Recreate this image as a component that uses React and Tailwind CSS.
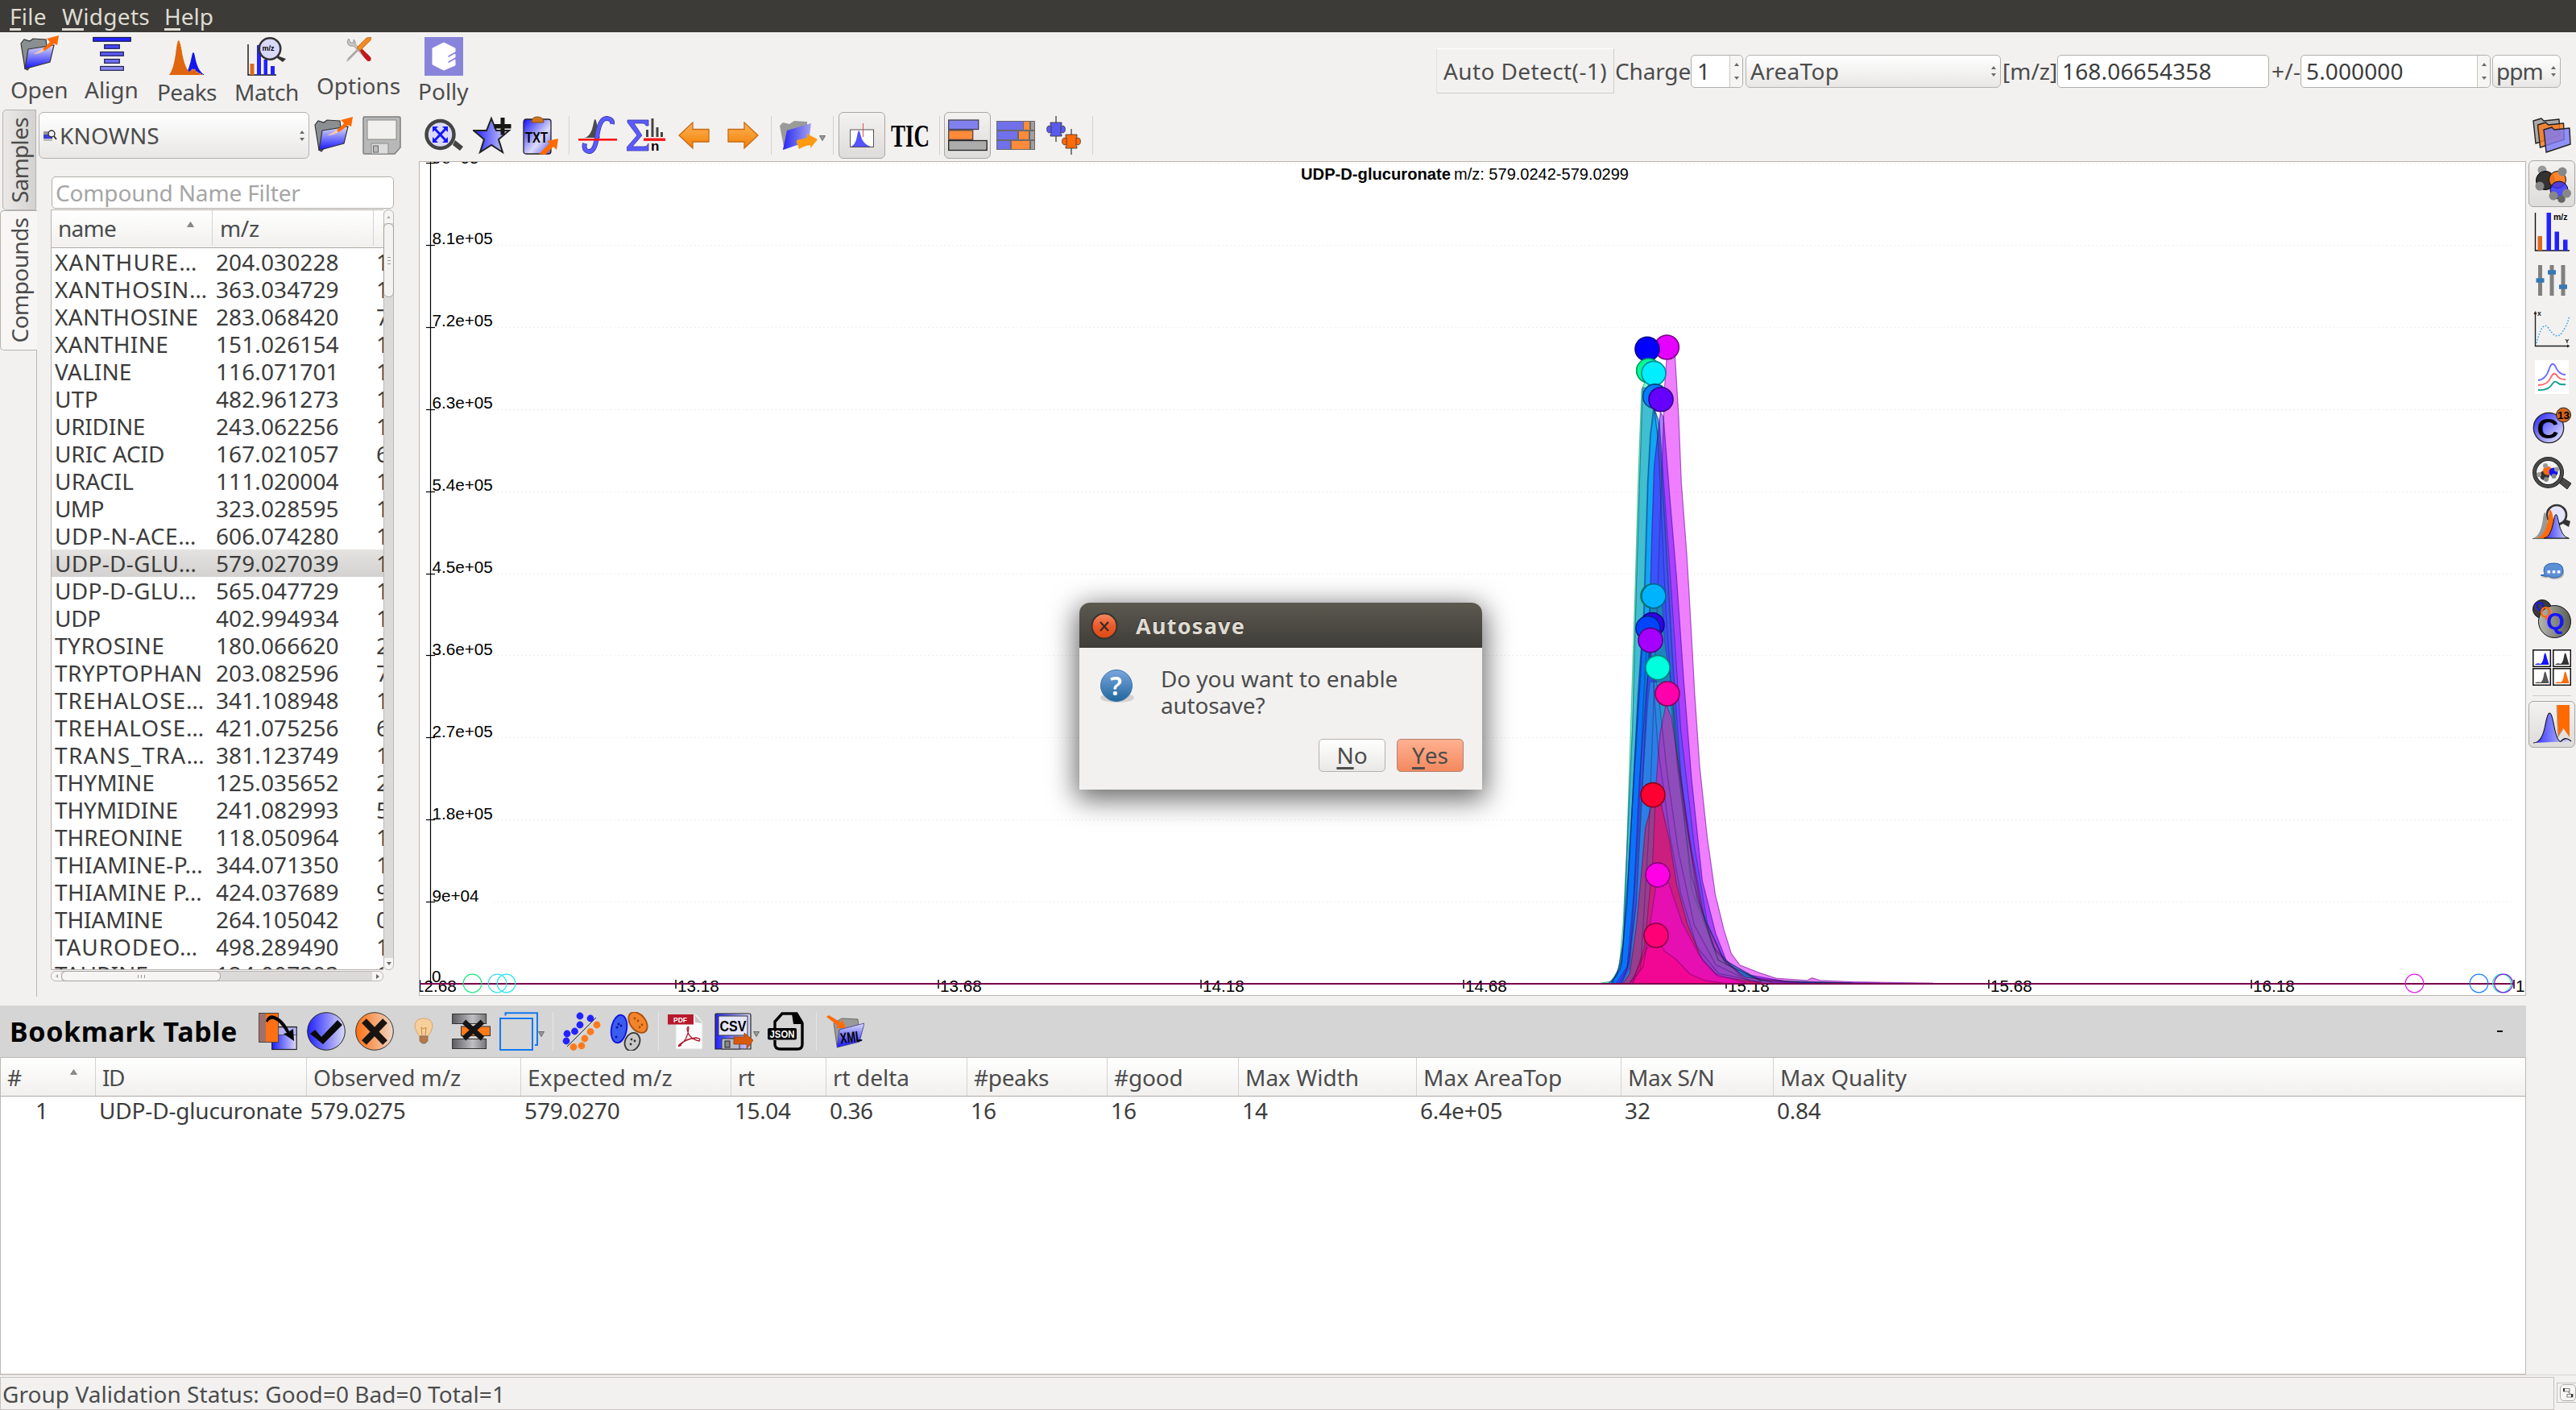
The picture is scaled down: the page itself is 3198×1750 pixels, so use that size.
import React, { useLayoutEffect, useRef, useState } from 'react';

/* Text run with a fixed advance width: tracking is computed from the measured width. */
function T({ w, className = '', children }) {
  const ref = useRef(null);
  const [ls, setLs] = useState(0);
  useLayoutEffect(() => {
    const el = ref.current;
    const n = el.textContent.length;
    setLs((w - el.offsetWidth) / n);
  }, [w]);
  return (
    <span className={`inline-block shrink-0 overflow-visible whitespace-pre ${className}`} style={{ width: w }}>
      <span ref={ref} className="inline-block whitespace-pre" style={{ letterSpacing: ls }}>
        {children}
      </span>
    </span>
  );
}

function Svg({ w = 48, h = 48, vb, className = '', children }) {
  return (
    <svg width={w} height={h} viewBox={vb || `0 0 ${w} ${h}`} className={`block shrink-0 ${className}`}>
      {children}
    </svg>
  );
}

const Defs = () => (
  <svg width="0" height="0" className="absolute">
    <defs>
      <linearGradient id="blueV" x1="0" y1="0" x2="0" y2="1"><stop offset="0" stopColor="#dcdcf8" /><stop offset="1" stopColor="#1414ff" /></linearGradient>
      <linearGradient id="blueH" x1="0" y1="0" x2="1" y2="0"><stop offset="0" stopColor="#2020ff" /><stop offset="1" stopColor="#dcdcf4" /></linearGradient>
      <linearGradient id="blueD" x1="0" y1="0" x2="1" y2="1"><stop offset="0" stopColor="#1010ff" /><stop offset=".6" stopColor="#dcdcf8" /><stop offset="1" stopColor="#5050ff" /></linearGradient>
      <linearGradient id="blueDD" x1="0" y1="0" x2="1" y2="1"><stop offset="0" stopColor="#1c1cff" /><stop offset="1" stopColor="#f4f4ff" /></linearGradient>
      <linearGradient id="orH" x1="0" y1="0" x2="1" y2="0"><stop offset="0" stopColor="#ff6f10" /><stop offset="1" stopColor="#eed8c8" /></linearGradient>
      <linearGradient id="orV" x1="0" y1="0" x2="0" y2="1"><stop offset="0" stopColor="#ffb35c" /><stop offset="1" stopColor="#f08000" /></linearGradient>
      <linearGradient id="grH" x1="0" y1="0" x2="1" y2="0"><stop offset="0" stopColor="#5c5c60" /><stop offset=".6" stopColor="#c0c0c4" /><stop offset="1" stopColor="#77777a" /></linearGradient>
      <linearGradient id="grB" x1="0" y1="0" x2="1" y2="0"><stop offset="0" stopColor="#b5b7b1" /><stop offset="1" stopColor="#5b5d58" /></linearGradient>
      <linearGradient id="pk" x1="0" y1="0" x2="1" y2="0"><stop offset="0" stopColor="#2b2bff" /><stop offset="1" stopColor="#d8d8f8" /></linearGradient>
      <linearGradient id="qm" x1="0" y1="0" x2="0" y2="1"><stop offset="0" stopColor="#7ba5de" /><stop offset="1" stopColor="#1f679c" /></linearGradient>
      <linearGradient id="cl" x1="0" y1="0" x2="0" y2="1"><stop offset="0" stopColor="#f58a63" /><stop offset=".5" stopColor="#ea5b2c" /><stop offset="1" stopColor="#dd4814" /></linearGradient>
    </defs>
  </svg>
);

const OpenFolder = (p) => (
  <Svg {...p}>
    <path d="M1 11 L5 6 L12 8 L16 5 L32 6 L33 14 L9 44 L6 42 Z" fill="#8a8f92" stroke="#333" strokeWidth="1.2" />
    <path d="M10 18 L42 13 L37 34 L6 42.500 Z" fill="url(#blueV)" stroke="#333" strokeWidth="1.2" />
    <path d="M16 24 Q28 20 37 9 L33 5 L48 1 L46 13 L42 11 Q32 22 16 24Z" fill="#ff6a00" />
    <path d="M16 24 Q22 22 28 17 L30 20 Q24 24 16 24Z" fill="#f7c9b4" />
  </Svg>
);

const AlignIcon = () => (
  <Svg>
    {[[0, 48, '#2222ff'], [14, 20, '#4545ff'], [9, 30, '#5a5af5'], [14, 20, '#7070f8'], [9, 30, '#8a8af5']].map(([x, w, c], i) => (
      <rect key={i} x={x + 0.7} y={3.5 + i * 9} width={w - 1.4} height="4.8" fill={c} stroke="#20204a" strokeWidth="1.2" />
    ))}
  </Svg>
);

const PeaksIcon = () => (
  <Svg>
    <path d="M22 47 Q27 40 30 24 Q32 14 34 24 Q37 42 46 47Z" fill="#1515f0" />
    <path d="M2 47 Q8 40 11 15 Q13 -6 17 13 Q20 36 27 44 Q32 36 36 43 L44 47Z" fill="#e8660e" stroke="#ffd9a0" strokeWidth=".8" strokeDasharray="2 2" />
    <path d="M2 47 Q8 40 11 15 Q13 0 17 15 Q20 36 27 44 Q32 39 36 44 L42 47Z" fill="#e0650f" />
  </Svg>
);

const MatchIcon = () => (
  <Svg>
    <path d="M1 9 V47 H36" fill="none" stroke="#111" strokeWidth="1.4" />
    <rect x="3.5" y="33" width="5" height="14" fill="#d96a20" />
    <rect x="12" y="10" width="5" height="37" fill="#2222ff" />
    <rect x="20.500" y="28" width="4.500" height="19" fill="#2222ff" />
    <rect x="29" y="36" width="5" height="11" fill="#2222ff" />
    <path d="M37 23 L48 27 L44 31 L37 26Z" fill="#333" />
    <circle cx="28" cy="14.500" r="13.200" fill="#d8d8fa" stroke="#333" strokeWidth="2.600" />
    <text x="18.500" y="17" fontFamily="Liberation Sans" fontWeight="700" fontSize="9">m/z</text>
  </Svg>
);

const OptionsIcon = () => (
  <Svg w={32} h={32}>
    <path d="M4 2 Q1 5 3 9 Q5 12 10 11 L26 28 Q29 31 31 28 Q32 26 29 23 L12 9 Q13 5 10 3 L10 7 L6 7Z" fill="#c9c9c4" stroke="#888" strokeWidth=".8" />
    <path d="M17 16 L20 14 L31 25 Q33 30 28 30 Q25 29 17 16Z" fill="#c4161c" />
    <path d="M1 31 L3 26 L16 13 L18 15 L5 28Z" fill="#a9a9a5" />
    <path d="M14 13 L26 1 L32 0 L31 4 L18 17Z" fill="#f08a24" stroke="#c25a00" strokeWidth=".7" />
  </Svg>
);

const PollyIcon = () => (
  <Svg>
    <rect width="48" height="48" fill="#8884dc" />
    <path d="M24 7 L38 14 V18 L29 23 V26 L38 21 V25 L29 30 V33 L38 28 V35 L24 41 L10 34 V14Z" fill="#fff" strokeLinejoin="round" stroke="#fff" strokeWidth="1" />
  </Svg>
);

const SaveIcon = (p) => (
  <Svg {...p}>
    <path d="M2.500 1 H45.500 Q47 1 47 3 V39 L40 47 H2.500 Q1 47 1 45 V3 Q1 1 2.500 1Z" fill="#b8b8b8" stroke="#7e7e7e" strokeWidth="1.500" />
    <rect x="6" y="5" width="36" height="24" fill="#f1f0ee" stroke="#888" />
    <path d="M11 47 V34 H32 V47Z" fill="#dcdcdc" stroke="#888" />
    <rect x="13.500" y="37" width="6" height="8" fill="#bbb" stroke="#666" />
  </Svg>
);

const ZoomIcon = () => (
  <Svg>
    <path d="M38 30 L48 38 L44 43 L35 36Z" fill="#444" />
    <circle cx="19.500" cy="23" r="17" fill="#dadaf8" stroke="#444" strokeWidth="4.500" />
    <path d="M12 15 L27 31 M27 15 L12 31" stroke="#1414ff" strokeWidth="3" />
    <path d="M10 13 h7 l-7 7z M29 13 v7 l-7 -7z M10 33 v-7 l7 7z M29 33 h-7 l7 -7z" fill="#1414ff" />
  </Svg>
);

const StarIcon = () => (
  <Svg>
    <path d="M23 3 L29 18 L45 18 L32 29 L37 45 L23 36 L9 45 L14 29 L1 18 L17 18Z" fill="url(#blueH)" stroke="#222" strokeWidth="2" />
    <path d="M34.500 2 h5 v8 h8 v5.500 h-8 v8 h-5 v-8 h-8 v-5.500 h8z" fill="#161616" />
  </Svg>
);

const TxtIcon = () => (
  <Svg>
    <rect x="2" y="4" width="34" height="43" rx="3" fill="url(#blueD)" stroke="#222" strokeWidth="1.300" />
    <path d="M12 8 Q12 1 19 1 Q27 1 27 8Z" fill="#d2741b" stroke="#8a4a10" />
    <text x="4" y="33" fontFamily="Liberation Sans" fontWeight="700" fontSize="18" textLength="28" lengthAdjust="spacingAndGlyphs">TXT</text>
    <path d="M21 47 L34 34 L31 31 L45 28 L43 42 L39 38 L29 48Z" fill="#ff6a00" />
  </Svg>
);

const IntegralIcon = () => (
  <Svg>
    <path d="M7 27 Q16 26 19 8 Q21 -1 23 10 Q25 24 27 27Z" fill="#4a4a4a" />
    <path d="M8 34 Q6 43 13 44 Q20 45 23 27 Q26 2 36 3 Q43 4 42 10" fill="none" stroke="#3b3b9e" strokeWidth="6" />
    <path d="M8 34 Q6 43 13 44 Q20 45 23 27 Q26 2 36 3 Q43 4 42 10" fill="none" stroke="#5a5aff" strokeWidth="4.500" />
    <rect x="0" y="28" width="48" height="2.600" fill="#ff1414" />
  </Svg>
);

const SumIcon = () => (
  <Svg>
    <path d="M1 5 H27 V12 H24 Q23 9 20 9 H9 L19 24 L7 38 H22 Q26 38 27 34 V43 H0 V39 L13 24 L1 8Z" fill="#5a5aff" stroke="#3b3b9e" strokeWidth=".8" />
    <path d="M25.500 26 V17 M32 26 V3 M38 26 V14 M43.500 26 V20" stroke="#444" strokeWidth="3" />
    <rect x="21" y="27.500" width="27" height="3.400" fill="#f31818" />
    <text x="30" y="43" fontFamily="Liberation Sans" fontWeight="700" fontSize="17">n</text>
  </Svg>
);

const ArrowL = ({ flip, className }) => (
  <Svg w={40} h={34} className={className}>
    <path transform={flip ? 'translate(40 0) scale(-1 1)' : undefined} d="M1 17 L18 1 V9.500 H38 V25 H18 V33Z" fill="url(#orV)" stroke="#c96a10" strokeWidth="1.300" />
  </Svg>
);

const FolderArrow = () => (
  <Svg>
    <path d="M0 12 L4 8 L12 10 L18 6 L34 7 L34 12 L8 40 L5 38Z" fill="#9a9a98" />
    <path d="M9 18 L39 9 L36 31 L4 42Z" fill="url(#blueH)" />
    <path d="M9 18 L39 9 L36 31 L4 42Z" fill="#3a3ae0" opacity=".35" />
    <path d="M21 33 V30 Q30 28 34 27 V22 L47 29 L38 40 V36 Q30 37 24 41Z" fill="#ff9a10" />
  </Svg>
);

const Caret = ({ className }) => (
  <Svg w={8} h={7} className={className}><path d="M.5 .5 H7.500 L4 6.500Z" fill="#999" stroke="#555" strokeWidth=".8" /></Svg>
);

const EicIcon = () => (
  <Svg w={30} h={32}>
    <rect x=".5" y="9" width="29" height="21.500" fill="#fff" stroke="#555" />
    <path d="M1.500 30 Q7 28 9 17 Q11 4 13.500 16 Q16 27 26 30Z" fill="#5353ff" />
    <path d="M16.500 1 V18" stroke="#e05050" strokeWidth="1" />
  </Svg>
);

const BarsIcon = () => (
  <Svg w={49} h={40}>
    <rect x=".7" y="1" width="37" height="11.500" fill="#8181ee" stroke="#445" strokeWidth="1.300" />
    <rect x=".7" y="13.800" width="30" height="11.500" fill="#ff8b3a" stroke="#544" strokeWidth="1.300" />
    <rect x=".7" y="26.500" width="47.500" height="12" fill="#acacac" stroke="#222" strokeWidth="1.300" />
  </Svg>
);

const StackIcon = () => (
  <Svg w={48} h={36}>
    <rect width="48" height="36" fill="#6a6a6a" />
    {[[1, 1, 32, '#7070ea'], [34, 1, 7, '#ff8b3a'], [43, 1, 4, '#a0a0a0'], [1, 13, 25, '#7070ea'], [28, 13, 12, '#ff8b3a'], [42, 13, 5, '#a0a0a0'], [1, 25, 16, '#7070ea'], [19, 25, 22, '#ff8b3a'], [43, 25, 4, '#a0a0a0']].map(([x, y, w, c], i) => (
      <rect key={i} x={x} y={y} width={w} height="10" fill={c} />
    ))}
  </Svg>
);

const BoxIcon = () => (
  <Svg w={44} h={48}>
    <path d="M12 0 V32 M31 16 V48" stroke="#333" strokeWidth="1.200" />
    {[[0, 7, '#5a5aee'], [19, 22, '#ff6a0a']].map(([x, y, c], i) => (
      <g key={i} fill={c} stroke="#333" strokeWidth=".8">
        <ellipse cx={x + 4} cy={y + 9.5} rx="3.400" ry="4.400" /><ellipse cx={x + 20} cy={y + 9.5} rx="3.400" ry="4.400" />
        <path d={`M${x + 5} ${y + 1} h14 v3 l-1 1 v10 l1 1 v2 h-14 v-2 l1 -1 v-10 l-1 -1z`} />
      </g>
    ))}
  </Svg>
);

/* ---------- right dock icons ---------- */
const Folders = () => (
  <Svg>
    {[[0, 2, '#9a9a98'], [5.500, 7, '#ff7a1a'], [13, 13, '#7a7af8']].map(([x, y, c], i) => (
      <path key={i} transform={`translate(${x} ${y})`} d="M1 3 L11 0 L14 3 L33 1 L34 21 L4 31Z" fill={c} fillOpacity=".82" stroke="#222" strokeWidth="1.400" strokeLinejoin="round" />
    ))}
  </Svg>
);
const Molecule = () => (
  <Svg>
    <circle cx="12" cy="7" r="5.500" fill="#999" />
    <circle cx="16" cy="20" r="11.500" fill="#333" stroke="#000" />
    <circle cx="31" cy="19" r="10.500" fill="#ff7a1a" stroke="#111" fillOpacity=".9" />
    <circle cx="33" cy="32" r="11" fill="#2b2bff" stroke="#111" fillOpacity=".8" />
    <circle cx="37" cy="9" r="5.500" fill="#888" /><circle cx="9" cy="27" r="5.500" fill="#888" />
    <circle cx="36" cy="43" r="4.800" fill="#666" /><circle cx="26" cy="39" r="5.500" fill="#888" /><circle cx="42.500" cy="36" r="5.500" fill="#888" />
  </Svg>
);
const MzBars = () => (
  <Svg>
    <path d="M3.500 0 V47 H46" fill="none" stroke="#111" strokeWidth="1.400" />
    <rect x="6.500" y="29" width="5.500" height="18" fill="#d96a20" />
    <rect x="17.500" y="0" width="5.500" height="47" fill="#2222ff" />
    <rect x="27.500" y="23.500" width="5.500" height="23.500" fill="#2222ff" />
    <rect x="38" y="33.500" width="5.500" height="13.500" fill="#2222ff" />
    <text x="26" y="8.500" fontFamily="Liberation Sans" fontWeight="700" fontSize="10.500">m/z</text>
  </Svg>
);
const Sliders = () => (
  <Svg>
    <path d="M9.500 5 V43 M24 5 V43 M38 5 V43" stroke="#808080" strokeWidth="5" />
    <path d="M4.500 24 h10 M19 14 h10 M33 32 h10" stroke="#3578b4" strokeWidth="5.500" />
  </Svg>
);
const Curve = () => (
  <Svg>
    <path d="M3.500 3 V45.500 H45" fill="none" stroke="#222" strokeWidth="1.400" />
    <path d="M1.500 6 L3.500 2 L5.500 6Z M43 43.500 L46.500 45.500 L43 47.500Z" fill="#222" />
    <path d="M5 42 Q12 14 19 22 Q30 40 37 28 Q43 20 46 8" fill="none" stroke="#35a5e5" strokeWidth="1.600" strokeDasharray="1.600 2" />
    <text x="6" y="8" fontFamily="Liberation Sans" fontWeight="700" fontSize="7">X</text>
    <text x="40.500" y="42" fontFamily="Liberation Sans" fontWeight="700" fontSize="7">Y</text>
  </Svg>
);
const Waves = () => (
  <Svg>
    <rect x="3" y="3" width="42" height="42" fill="#fff" />
    <g fill="none" strokeWidth="1.800">
      <path d="M7 28 Q17 27 21 13 Q25 2 30 14 Q34 21 41 21" stroke="#6a6aff" />
      <path d="M7 34 Q19 34 23 24 Q27 16 31 23 Q34 27 41 27" stroke="#ff6464" />
      <path d="M7 40 Q20 41 25 32 Q28 28 31 31 Q34 34 41 33" stroke="#10a090" />
    </g>
  </Svg>
);
const C13 = () => (
  <Svg>
    <circle cx="20" cy="27" r="18.700" fill="url(#blueDD)" stroke="#222" strokeWidth="1.300" />
    <text x="5.500" y="40" fontFamily="Liberation Sans" fontWeight="700" fontSize="35" textLength="27" lengthAdjust="spacingAndGlyphs">C</text>
    <circle cx="38.500" cy="11" r="9" fill="#d2641b" stroke="#222" />
    <text x="31" y="15.500" fontFamily="Liberation Sans" fontWeight="700" fontSize="13.500">13</text>
  </Svg>
);
const MolSearch = () => (
  <Svg>
    <path d="M36 28 L48 36 L43 43 L33 35Z" fill="#4a4a4a" stroke="#222" />
    <circle cx="19.500" cy="22.500" r="17" fill="#f4f4f4" stroke="#222" strokeWidth="5" />
    <circle cx="19.500" cy="22.500" r="17" fill="none" stroke="#4a4a4a" strokeWidth="3.200" />
    <circle cx="15" cy="26" r="6" fill="#333" /><circle cx="18.500" cy="20" r="5.500" fill="#ff6a0a" /><circle cx="26" cy="22" r="5.500" fill="#1414ff" />
    <circle cx="16" cy="14" r="3" fill="#999" /><circle cx="30" cy="18.500" r="3" fill="#999" /><circle cx="8" cy="25" r="3" fill="#999" /><circle cx="17" cy="31" r="3" fill="#888" /><circle cx="26.500" cy="27" r="3" fill="#888" />
  </Svg>
);
const PeakSearch = () => (
  <Svg>
    <path d="M37 19 L47 23 L45 30 L36 25Z" fill="#333" />
    <circle cx="30" cy="15" r="12" fill="#e4e4fa" stroke="#333" strokeWidth="2.600" />
    <path d="M0 44 Q10 42 13 20 Q15 4 18 20 L22 44Z" fill="#999" />
    <path d="M5 44 Q17 41 20 16 Q22 0 26 20 L30 44Z" fill="#ff6a0a" />
    <path d="M14 44 Q22 44 26 24 Q29 6 32 22 Q36 43 45 44Z" fill="url(#pk)" stroke="#111" />
    <path d="M0 44.500 H46" stroke="#444" strokeWidth=".8" />
  </Svg>
);
const Bubble = () => (
  <Svg>
    <path d="M26 34 Q39 34 39 26 Q39 17 27 16 Q14 16 14 25 Q14 28 16 29 Q13 31 10 31 Q17 33 20 32 Q23 34 26 34Z" fill="#9a9a9a" transform="translate(0 1)" opacity=".7" />
    <path d="M26 33 Q38 33 38 24 Q38 15 26.500 15 Q14 15 14 24 Q14 27 16 28 Q13 30 10 30 Q17 32 20 31 Q23 33 26 33Z" fill="#5b8fd6" stroke="#2a62ad" />
    <path d="M18.500 24 h3.600 v3.600 h-3.600z M24.700 24 h3.600 v3.600 h-3.600z M30.800 24 h3.600 v3.600 h-3.600z" fill="#fff" />
  </Svg>
);
const QIcon = () => (
  <Svg>
    <circle cx="12" cy="12" r="11.500" fill="#3a3a3a" stroke="#111" />
    <circle cx="27.500" cy="27.500" r="20" fill="url(#grB)" stroke="#111" />
    <g fontFamily="Liberation Sans" fontWeight="700">
      <text x="3.500" y="12.500" fontSize="14" fill="#1414ff">Q</text>
      <text x="9" y="21.500" fontSize="19" fill="#ff6a0a">Q</text>
      <text x="17" y="37" fontSize="29" fill="#1414ff">Q</text>
    </g>
  </Svg>
);
const GridIcon = () => (
  <Svg>
    {[[0, 2, '#1414ff'], [25, 2, '#333'], [0, 25, '#555'], [25, 25, '#ff6a0a']].map(([x, y, c], i) => (
      <g key={i} transform={`translate(${x} ${y})`}>
        <rect x=".8" y=".8" width="21.500" height="20.500" fill="#fff" stroke="#111" strokeWidth="1.500" />
        <path d="M3 19 L4 18 L7 17.300 L10 18 Q13 16 14 9 Q15.500 0 17.500 9 L20.500 19Z" fill={c} />
      </g>
    ))}
  </Svg>
);
const BookmarkPeak = () => (
  <Svg w={50} h={52}>
    <path d="M31 2 H47 V42 L39.500 31 L32.500 42Z" fill="#ff6a00" />
    <path d="M31 2 L32.500 42 L39.500 31" fill="none" stroke="#aaa" strokeWidth="1" />
    <path d="M2 49 Q13 49 17 26 Q22 -1 27 24 Q31 47 36 47.500 Q42 40 49 47" fill="url(#pk)" stroke="#111" strokeWidth="1.100" />
  </Svg>
);

/* ---------- bookmark toolbar icons ---------- */
const MoveIcon = () => (
  <Svg>
    <rect x="16.700" y="18.500" width="30.500" height="28" fill="url(#blueH)" stroke="#222" strokeWidth="1.200" />
    <rect x="17" y="19" width="30" height="9.500" fill="#b4b4f4" stroke="#222" strokeWidth=".6" />
    <rect x=".6" y="1.500" width="24" height="36" fill="#ff7014" stroke="#444" />
    <rect x="1" y="2" width="8" height="35" fill="#a0706a" />
    <path d="M9 11 Q12 2 20 5 Q31 9 38 24 L43 21 L44 36 L31 27 L35 26 Q27 12 19 9 Q14 8 11 13Z" fill="#000" />
  </Svg>
);
const CheckIcon = () => (
  <Svg>
    <circle cx="24" cy="24" r="23.300" fill="url(#blueH)" stroke="#222" />
    <path d="M4 27 L10 22 L18 31 L38 10 L44 16 L20 40Z" fill="#0a0a0a" />
  </Svg>
);
const CrossIcon = () => (
  <Svg>
    <circle cx="24" cy="24" r="23.300" fill="url(#orH)" stroke="#333" />
    <path d="M11 11 L37 38 M37 11 L11 38" stroke="#1a1410" strokeWidth="8" />
  </Svg>
);
const BulbIcon = () => (
  <Svg w={24} h={34}>
    <path d="M1 11 Q1 1 12 1 Q23 1 23 11 Q22 17 17.500 23 H6.500 Q2 17 1 11Z" fill="#f6cf9a" stroke="#d8a56c" />
    <path d="M10 22 L9 12 L12 14 L15 12 L14 22" fill="none" stroke="#c08040" strokeWidth=".9" />
    <path d="M7 23 H17 V29 L14 32 H10 L7 29Z" fill="#b87846" stroke="#7a6a5a" strokeWidth=".8" />
  </Svg>
);
const MergeIcon = () => (
  <Svg>
    <rect x=".6" y="2.500" width="42" height="12" fill="url(#grH)" stroke="#333" />
    <rect x=".6" y="33.500" width="42" height="12" fill="url(#grH)" stroke="#333" />
    <rect x="11.500" y="18" width="36" height="11.500" fill="#ff7a1a" stroke="#333" />
    <path d="M15 12 L38 33 M38 12 L15 33" stroke="#151515" strokeWidth="6.500" />
  </Svg>
);
const WindowsIcon = () => (
  <Svg>
    <path d="M7.500 4.500 V1.200 H47 V41 H44" fill="none" stroke="#1478f0" strokeWidth="2" />
    <rect x="1" y="8" width="40" height="39" fill="none" stroke="#1478f0" strokeWidth="2" />
  </Svg>
);
const ScatterIcon = () => (
  <Svg>
    <path d="M6 43 L42 7" stroke="#222" />
    {[[22, 5], [35, 8], [22, 16], [15.500, 24], [6, 27], [5, 36]].map(([x, y], i) => <circle key={i} cx={x} cy={y} r="4.400" fill="#2222ff" />)}
    {[[43, 16], [35, 24.500], [28, 33], [14, 43.500], [24, 42]].map(([x, y], i) => <circle key={i} cx={x} cy={y} r="4.400" fill="#ff7a1a" />)}
  </Svg>
);
const CellsIcon = () => (
  <Svg>
    <ellipse cx="11.500" cy="21" rx="9.500" ry="17.500" transform="rotate(10 11.500 21)" fill="#3a5cf0" stroke="#1010e0" strokeWidth="1.800" />
    <ellipse cx="35" cy="13" rx="9.500" ry="14.500" transform="rotate(-38 35 13)" fill="#f4842a" stroke="#a85010" strokeWidth="1.800" />
    <ellipse cx="28" cy="37" rx="9" ry="11.500" transform="rotate(24 28 37)" fill="#c8c8c8" stroke="#333" strokeWidth="1.800" />
    <g fill="#1010a0"><circle cx="11" cy="15" r="1.500" /><circle cx="9" cy="19" r="1.500" /><circle cx="14" cy="17" r="1.500" /><circle cx="8" cy="31" r="1.500" /></g>
    <g fill="#a05010"><circle cx="31" cy="8" r="1.400" /><circle cx="35" cy="11" r="1.400" /><circle cx="40" cy="16" r="1.400" /><circle cx="37" cy="19" r="1.400" /></g>
    <g fill="#333"><circle cx="27" cy="34" r="1.400" /><circle cx="31" cy="36" r="1.400" /><circle cx="26" cy="40" r="1.400" /></g>
  </Svg>
);
const PdfIcon = () => (
  <Svg>
    <path d="M11 3 H36 L44 12 V46 H11Z" fill="#fbfbfb" stroke="#ddd" />
    <path d="M34 3 L44 14 L35 13Z" fill="#c8c8c8" />
    <rect x="1" y="3" width="32" height="12.500" fill="#b8182c" />
    <text x="8" y="13" fontFamily="Liberation Sans" fontWeight="700" fontSize="9.500" fill="#fff" textLength="17" lengthAdjust="spacingAndGlyphs">PDF</text>
    <path d="M15 42 Q26 35 27 20 Q27 17 25 20 Q26 33 40 36 Q43 33 36 32 Q24 33 15 41 Q13 44 18 41" fill="none" stroke="#b0122a" strokeWidth="1.300" />
  </Svg>
);
const CsvIcon = () => (
  <Svg>
    <path d="M1 3 Q1 2 3 2 H43 Q45 2 45 4 V46 H1Z" fill="url(#blueH)" stroke="#222" strokeWidth="1.200" />
    <rect x="5" y="5" width="36" height="24" fill="#e6e6fa" stroke="#333" />
    <text x="6.500" y="24" fontFamily="Liberation Sans" fontWeight="700" fontSize="18" textLength="33" lengthAdjust="spacingAndGlyphs">CSV</text>
    <rect x="9" y="33" width="22" height="13" fill="#b8b8c8" stroke="#333" />
    <rect x="13" y="36" width="6" height="8" fill="#888" stroke="#222" />
    <path d="M24 31 H37 V26 L48 35 L40 46 V40 H24Z" fill="#d95a0c" stroke="#8a3a08" strokeWidth=".7" />
  </Svg>
);
const JsonIcon = () => (
  <Svg>
    <path d="M9 22 V12 L18 2 H36 L43 14 V40 Q43 46 37 46 H16 Q9 46 9 40 V35" fill="none" stroke="#000" strokeWidth="3.400" />
    <path d="M30 2 H37 L44 12 V15 H32Z" fill="#000" />
    <rect x="0" y="20" width="36" height="14.500" rx="2" fill="#000" />
    <text x="2.500" y="31.500" fontFamily="Liberation Sans" fontWeight="700" fontSize="12" fill="#fff" textLength="31" lengthAdjust="spacingAndGlyphs">JSON</text>
  </Svg>
);
const XmlIcon = () => (
  <Svg>
    <path d="M10 14 L20 8 L40 9 L41 18 L14 42Z" fill="#9a9a98" stroke="#555" strokeWidth=".8" />
    <path d="M17 22 L48 14 L42 37 L14 44Z" fill="url(#blueV)" stroke="#3a3a8a" strokeWidth=".8" />
    <text x="18" y="38" fontFamily="Liberation Sans" fontWeight="700" fontSize="19" textLength="27" lengthAdjust="spacingAndGlyphs" transform="rotate(-7 30 32)">XML</text>
    <path d="M1 6 L4 4 L19 13 L21 10 L25 20 L13 20 L15 17Z" fill="#ff6a0a" />
  </Svg>
);

const TriUp = ({ className }) => (
  <Svg w={9} h={7} className={className}><path d="M.5 6.500 H8.500 L4.500 .5Z" fill="#8a8a8a" stroke="#666" strokeWidth=".6" /></Svg>
);
const Spin = ({ className, gap = 'gap-[5px]' }) => (
  <span className={`flex flex-col items-center ${gap} ${className}`}>
    <Svg w={6} h={4}><path d="M0 4 H6 L3 0Z" fill="#6a6a6a" /></Svg>
    <Svg w={6} h={4}><path d="M0 0 H6 L3 4Z" fill="#6a6a6a" /></Svg>
  </span>
);
const Sep = ({ className }) => <span className={`h-12 w-px shrink-0 bg-[#d3d1ce] ${className}`} />;

/* ---------- data ---------- */
const compounds = [
  ['XANTHURE…', '204.030228', '1', 178], ['XANTHOSIN…', '363.034729', '1', 190], ['XANTHOSINE', '283.068420', '7', 178],
  ['XANTHINE', '151.026154', '1', 141], ['VALINE', '116.071701', '1', 96], ['UTP', '482.961273', '1', 54],
  ['URIDINE', '243.062256', '1', 112], ['URIC ACID', '167.021057', '6', 136], ['URACIL', '111.020004', '1', 98],
  ['UMP', '323.028595', '1', 61], ['UDP-N-ACE…', '606.074280', '1', 176], ['UDP-D-GLU…', '579.027039', '1', 176],
  ['UDP-D-GLU…', '565.047729', '1', 176], ['UDP', '402.994934', '1', 57], ['TYROSINE', '180.066620', '2', 136],
  ['TRYPTOPHAN', '203.082596', '7', 184], ['TREHALOSE…', '341.108948', '1', 186], ['TREHALOSE…', '421.075256', '6', 186],
  ['TRANS_TRA…', '381.123749', '1', 187], ['THYMINE', '125.035652', '2', 124], ['THYMIDINE', '241.082993', '5', 153],
  ['THREONINE', '118.050964', '1', 159], ['THIAMINE-P…', '344.071350', '1', 184], ['THIAMINE P…', '424.037689', '9', 183],
  ['THIAMINE', '264.105042', '0', 134], ['TAURODEO…', '498.289490', '1', 178], ['TAURINE', '124.007393', '6', 116],
];

const columns = [
  ['#', 118, 17, '1', 37], ['ID', 262, 27, 'UDP-D-glucuronate', 5, 253], ['Observed m/z', 266, 183, '579.0275', 6, 119],
  ['Expected m/z', 261, 180, '579.0270', 5, 119], ['rt', 118, 21, '15.04', 5, 70], ['rt delta', 175, 95, '0.36', 4, 54],
  ['#peaks', 174, 93, '16', 5, 32], ['#good', 163, 85, '16', 5, 32], ['Max Width', 221, 141, '14', 5, 32],
  ['Max AreaTop', 254, 172, '6.4e+05', 5, 102], ['Max S/N', 189, 107, '32', 5, 32], ['Max Quality', 0, 157, '0.84', 5, 55],
];

/* Peak shapes in plot units: 3 units per pixel across, 1.8233 per pixel down. */
const peaks = [
  ['#e000ff', '380,1532 410,1500 440,1200 465,800 488,400 500,180 508,110 538,110 552,250 562,400 582,560 590,640 612,880 630,1040 658,1200 688,1330 720,1410 748,1465 780,1491 850,1508 915,1521 1030,1526 1048,1520 1080,1526 1200,1529 1500,1532'],
  ['#00ff99', '260,1532 300,1528 330,1500 345,1400 358,1240 370,1020 390,640 402,380 414,190 430,165 450,175 475,300 500,500 545,1000 600,1320 700,1480 860,1526 1200,1532'],
  ['#0080d4', '290,1532 322,1515 346,1440 358,1250 380,950 395,620 406,400 418,185 450,185 475,300 505,700 545,1030 600,1290 680,1450 780,1510 900,1529 1200,1532'],
  ['#00a0ff', '300,1532 340,1490 365,1280 385,1060 420,720 436,400 446,290 458,230 480,260 515,560 560,960 610,1220 660,1400 730,1490 860,1526 1200,1532'],
  ['#00a0ff', '305,1532 340,1480 362,1300 385,1080 424,700 438,400 448,290 462,230 478,270 500,480 530,800 560,1060 620,1340 700,1480 860,1528'],
  ['#6600ff', '330,1532 360,1500 395,1350 420,1050 440,800 452,520 461,360 484,240 495,250 520,440 545,620 570,840 600,1070 640,1300 690,1420 730,1482 820,1514 960,1529 1300,1532'],
  ['#00b884', '340,1532 370,1480 400,1200 420,900 440,700 450,670 490,670 500,760 520,840 545,980 575,1150 630,1350 690,1460 780,1514 900,1530'],
  ['#0044ff', '300,1532 335,1500 360,1350 380,1120 400,880 415,750 430,735 455,830 475,1000 520,1200 560,1330 620,1450 700,1510 860,1530'],
  ['#5a30ff', '320,1532 360,1495 385,1330 405,1080 430,880 447,780 475,870 510,1060 550,1230 610,1400 690,1490 820,1528'],
  ['#20b4dd', '340,1532 368,1500 392,1360 412,1130 437,900 446,850 500,850 525,910 555,1060 590,1210 640,1370 720,1480 860,1526'],
  ['#ff00aa', '380,1532 425,1450 455,1260 468,1080 482,970 505,900 525,930 565,1090 600,1230 650,1390 720,1480 800,1519 1000,1530'],
  ['#ff0033', '345,1532 370,1510 395,1400 412,1290 428,1180 456,1120 488,1130 518,1210 545,1310 585,1400 640,1480 700,1517 860,1531'],
  ['#ff00e6', '370,1532 420,1495 440,1420 468,1310 515,1305 565,1395 630,1470 690,1512 800,1531'],
  ['#ff0077', '370,1532 400,1500 435,1450 490,1450 500,1460 540,1477 595,1512 650,1526 720,1532'],
];
const dots = [
  [508, 93, '#e600ff', '#7a0088'], [435, 97, '#0000ff', '#000088'], [440, 146, '#00ff99', '#009955'], [459, 152, '#00eeff', '#008899'],
  [464, 204, '#0080ff', '#004488'], [486, 211, '#6600ff', '#330088'], [456, 656, '#00ff66', '#008844'], [459, 656, '#00b3ff', '#006688'], [453, 721, '#3300e6', '#180088'],
  [438, 729, '#0044ff', '#002288'], [447, 756, '#a600ff', '#550088'], [474, 818, '#00ffdd', '#008877'], [510, 877, '#ff00aa', '#88005a'],
  [456, 1106, '#ff0033', '#88001a'], [474, 1287, '#ff00e6', '#88007a'], [468, 1424, '#ff0077', '#880040'],
];
const yLabels = ['9e+04', '1.8e+05', '2.7e+05', '3.6e+05', '4.5e+05', '5.4e+05', '6.3e+05', '7.2e+05', '8.1e+05', '9e+05'];
const xLabels = ['12.68', '13.18', '13.68', '14.18', '14.68', '15.18', '15.68', '16.18', '16.68'];

function Chart() {
  return (
    <svg width="2614" height="1033" viewBox="521 201 2614 1033" className="block" fontFamily="Liberation Sans" fontSize="20.700">
      {yLabels.map((t, i) => {
        const y = 1221 - 101.9 * (i + 1);
        return (
          <g key={t}>
            <path d={`M612 ${Math.round(y) + 0.5} H3122`} stroke="#efefef" strokeDasharray="2 3" />
            <path d={`M529 ${Math.round(y) + 0.5} H540`} stroke="#000" strokeWidth="1.200" />
            <text x="536.500" y={i === 9 ? y + 1 : y - 0.5}>{t}</text>
          </g>
        );
      })}
      <path d="M534.500 201 V1221" stroke="#000" strokeWidth="1.200" />
      <text x="536" y="1218.500">0</text>
      {xLabels.map((t, i) => (
        <g key={t}>
          <path d={`M${(i ? 513 : 521) + 326 * i} 1216 V1227`} stroke="#000" strokeWidth="1.500" />
          <text x={515 + 326 * i} y="1230.500">{t}</text>
        </g>
      ))}
      <g transform="translate(1900 380) scale(.33333 .54845)">
        {peaks.map(([c, pts], i) => (
          <polygon key={i} points={pts} fill={c} fillOpacity=".5" stroke={c} strokeOpacity=".5" strokeWidth=".8" vectorEffect="non-scaling-stroke" />
        ))}
        {peaks.map(([c, pts], i) => (
          <polyline key={i} points={pts} fill="none" stroke={i === 1 ? '#006040' : '#201050'} strokeOpacity=".34" strokeWidth="1.200" vectorEffect="non-scaling-stroke" />
        ))}
      </g>
      <path d="M521 1221 H3121" stroke="#78004e" strokeWidth="2" />
      {dots.map(([x, y, c, s], i) => (
        <circle key={i} cx={1900 + x / 3} cy={380 + y / 1.8233} r="15" fill={c} stroke={s} strokeWidth="1.600" />
      ))}
      {[[586.5, '#18e878'], [617.5, '#30e0e8'], [628.5, '#20e8f4'], [2997.5, '#e018f0'], [3077.5, '#1080ff'], [3106, '#20f0a0'], [3108, '#8a10f0']].map(([x, c], i) => (
        <circle key={i} cx={x} cy="1220.500" r="11.300" fill="none" stroke={c} strokeWidth="1.200" />
      ))}
      <text x="1615" y="222.500" fontSize="20" fontWeight="700" textLength="186" lengthAdjust="spacingAndGlyphs">UDP-D-glucuronate</text>
      <text x="1805" y="222.500" fontSize="20" textLength="217" lengthAdjust="spacingAndGlyphs">m/z: 579.0242-579.0299</text>
    </svg>
  );
}

function Dialog() {
  return (
    <div className="absolute left-[1340px] top-[748px] flex h-[232px] w-[500px] flex-col rounded-t-[13px] bg-[#f2f1f0] shadow-[0_8px_34px_4px_rgba(0,0,0,0.6)]">
      <div className="flex h-14 shrink-0 items-center rounded-t-[13px] bg-linear-to-b from-[#5c5950] to-[#3e3d38] pl-[14px] pt-[2px]">
        <Svg w={34} h={34}>
          <circle cx="17" cy="17" r="15.500" fill="url(#cl)" stroke="#35332e" strokeWidth="2" />
          <path d="M12 12 L22 23 M22 12 L12 23" stroke="#3a2a22" strokeWidth="2.200" />
        </Svg>
        <T w={136} className="ml-[22px] text-[27px] font-bold leading-9 text-[#dfdbd2] [text-shadow:0_-1px_1px_#222]">Autosave</T>
      </div>
      <div className="flex pl-[25px] pt-[21px]">
        <Svg w={44} h={52}>
          <ellipse cx="22" cy="41" rx="21" ry="6" fill="#d4d2d0" />
          <circle cx="21" cy="26" r="19.500" fill="url(#qm)" stroke="#3a74ad" />
          <text x="13" y="37.500" fontFamily="Noto Sans" fontSize="32" fontWeight="600" fill="#fff">?</text>
        </Svg>
        <div className="ml-[32px] mt-px flex flex-col text-[28px] leading-[33px] text-[#4c4c4c]">
          <T w={294}>Do you want to enable</T>
          <T w={129}>autosave?</T>
        </div>
      </div>
      <div className="mt-[25px] flex justify-end gap-[14px] pr-[23px] text-[28px] text-[#4c4c4c]">
        <button className="flex h-[41px] w-[83px] justify-center rounded-[5px] border border-[#b4b1ad] bg-linear-to-b from-white to-[#e9e8e6] leading-[39px]">
          <span className="underline decoration-[3px] underline-offset-[4px]">N</span>o
        </button>
        <button className="flex h-[41px] w-[83px] justify-center rounded-[5px] border border-[#b3826d] bg-linear-to-b from-[#ffb090] to-[#f3895f] leading-[39px]">
          <span className="underline decoration-[3px] underline-offset-[4px]">Y</span>es
        </button>
      </div>
    </div>
  );
}

const Tool = ({ w, ml, top, icon, gap, label }) => (
  <div className={`flex shrink-0 flex-col items-center ${ml} ${top}`}>
    {icon}
    <T w={w} className={`leading-9 ${gap}`}>{label}</T>
  </div>
);

export default function App() {
  const field = 'flex h-[41px] shrink-0 items-center rounded-[5px] border border-[#b2afab] bg-white leading-[39px] text-[#3c3c3c]';
  const combo = 'flex shrink-0 items-center rounded-[6px] border border-[#b5b2ae] bg-linear-to-b from-white to-[#e8e7e5]';
  return (
    <div className="relative flex h-[1750px] w-[3198px] flex-col overflow-hidden bg-[#f2f1f0] font-['Noto_Sans',sans-serif] text-[28px] text-[#4c4c4c]">
      <Defs />
      {/* menu bar */}
      <div className="flex h-10 shrink-0 items-start bg-[#3c3b37] pl-3 leading-10 text-[#dfdbd2]">
        {[['F', 'ile', 46, 'mr-[19px]', 'w-[14px]'], ['W', 'idgets', 109, 'mr-[18px]', 'w-[27px]'], ['H', 'elp', 61, '', 'w-[20px]']].map(([a, b, w, m, u]) => (
          <span key={a} className={`flex flex-col ${m}`}>
            <T w={w} className="h-[35px] leading-10">{a + b}</T>
            <span className={`h-[3px] bg-[#dfdbd2] ${u}`} />
          </span>
        ))}
      </div>

      {/* main toolbar */}
      <div className="flex h-24 shrink-0 items-start">
        <Tool w={71} ml="ml-[13px]" top="mt-[3px]" gap="mt-[2px]" icon={<OpenFolder />} label="Open" />
        <Tool w={67} ml="ml-[21px]" top="mt-[3px]" gap="mt-[2px]" icon={<AlignIcon />} label="Align" />
        <Tool w={74} ml="ml-[23px]" top="mt-[6px]" gap="mt-[2px]" icon={<PeaksIcon />} label="Peaks" />
        <Tool w={80} ml="ml-[22px]" top="mt-[6px]" gap="mt-[2px]" icon={<MatchIcon />} label="Match" />
        <Tool w={104} ml="ml-[22px]" top="mt-[6px]" gap="mt-[10px]" icon={<OptionsIcon />} label="Options" />
        <Tool w={63} ml="ml-[22px]" top="mt-[6px]" gap="mt-[1px]" icon={<PollyIcon />} label="Polly" />
        <div className="ml-auto mr-[19px] mt-5 flex items-center">
          <div className="flex h-14 w-[221px] items-center justify-center border border-[#cfccc8] border-l-[#e4e2e0] border-t-white">
            <T w={203}>Auto Detect(-1)</T>
          </div>
          <T w={94} className="ml-px">Charge</T>
          <div className={`${field} w-[65px] pl-[7px]`}>
            <T w={16}>1</T>
            <span className="ml-auto flex h-full w-4 items-center justify-center rounded-r-[5px] border-l border-[#c8c5c2] bg-[#f6f5f4]"><Spin gap="gap-[13px]" /></span>
          </div>
          <div className={`${combo} ml-[3px] h-[41px] w-[317px] pl-[5px] pr-[5px]`}><T w={110}>AreaTop</T><Spin className="ml-auto" /></div>
          <T w={68} className="ml-[2px]">[m/z]</T>
          <div className={`${field} w-[263px] pl-[5px]`}><T w={186}>168.06654358</T></div>
          <T w={36} className="ml-[3px]">+/-</T>
          <div className={`${field} w-[236px] pl-[6px]`}>
            <T w={121}>5.000000</T>
            <span className="ml-auto flex h-full w-4 items-center justify-center rounded-r-[5px] border-l border-[#c8c5c2] bg-[#f6f5f4]"><Spin gap="gap-[13px]" /></span>
          </div>
          <div className={`${combo} ml-[2px] h-[41px] w-[85px] pl-[4px] pr-[5px]`}><T w={58}>ppm</T><Spin className="ml-auto" /></div>
        </div>
      </div>

      <div className="flex h-[1570px] shrink-0">
        <div className="flex w-[3136px] shrink-0 flex-col">
          <div className="flex h-[1112px] shrink-0">
            {/* dock tabs */}
            <div className="flex w-[46px] shrink-0 flex-col">
              <div className="ml-[3px] flex h-[125px] w-[42px] shrink-0 items-center justify-center rounded-l-[5px] border border-[#b5b2ae] bg-linear-to-r from-[#ebeae8] to-[#d4d2d0]">
                <T w={106} className="-rotate-90 leading-9">Samples</T>
              </div>
              <div className="flex h-[174px] w-[46px] shrink-0 items-center justify-center rounded-l-[5px] border border-r-0 border-[#b5b2ae] bg-[#f7f6f5]">
                <T w={155} className="-rotate-90 leading-9">Compounds</T>
              </div>
              <div className="h-[802px] shrink-0 border-r border-[#bab7b3]" />
            </div>

            {/* compounds panel */}
            <div className="flex w-[473px] shrink-0 flex-col">
              <div className="flex h-[83px] items-start pl-[2px] pt-[3px]">
                <div className={`${combo} h-[58px] w-[336px] pl-[5px] pr-[5px]`}>
                  <Svg w={17} h={14}>
                    <rect x="0" y="2" width="11" height="4" fill="#999" /><rect x="0" y="6" width="11" height="5" fill="#3c3ce0" /><rect x="0" y="11" width="11" height="3" fill="#bbb" />
                    <circle cx="10" cy="5" r="4" fill="#eee" stroke="#333" strokeWidth="1.400" /><path d="M13 8 L16 12" stroke="#333" strokeWidth="1.800" />
                  </Svg>
                  <T w={124} className="ml-[3px]">KNOWNS</T>
                  <Spin className="ml-auto" />
                </div>
                <OpenFolder className="ml-[6px] mt-[5px]" />
                <SaveIcon className="ml-[12px] mt-[5px]" />
              </div>
              <div className={`${field} ml-[18px] !h-[40px] w-[425px] pl-[4px] !text-[#a5a5a5]`}><T w={304}>Compound Name Filter</T></div>
              <div className="ml-[17px] mt-px flex">
                <div className="flex h-[944px] w-[413px] flex-col overflow-hidden border border-r-0 border-[#b9b5b0] bg-white">
                  <div className="flex h-[47px] shrink-0 items-center border-b border-[#b0aca7] bg-linear-to-b from-white to-[#f1f0ee] pb-[2px]">
                    <div className="flex h-full w-[200px] shrink-0 items-center border-r border-[#d5d3d0] pl-[8px]"><T w={72}>name</T><TriUp className="mb-[9px] ml-[88px]" /></div>
                    <div className="flex h-full w-[200px] shrink-0 items-center border-r border-[#d5d3d0] pl-[9px]"><T w={49}>m/z</T></div>
                    <span className="ml-[10px] w-[2px] overflow-hidden text-[#c06a3a]">r</span>
                  </div>
                  {compounds.map(([n, v, c, w], i) => (
                    <div key={i} className={`flex h-[34px] shrink-0 items-center leading-[34px] text-[#3c3c3c] ${i === 11 ? 'bg-linear-to-b from-[#e4e3e1] to-[#d3d2d0]' : ''}`}>
                      <T w={w} className="ml-[4px]">{n}</T>
                      <span className="grow" />
                      <span className="flex w-[208px] shrink-0"><T w={153}>{v}</T><span className="ml-[46px]">{c}</span></span>
                    </div>
                  ))}
                </div>
                <div className="flex h-[944px] w-[13px] flex-col items-center rounded-[6px] border border-[#bcb9b5] bg-[#dcdad8]">
                  <div className="flex h-4 w-[11px] shrink-0 items-center justify-center rounded-t-[6px] bg-[#f6f5f4]"><Svg w={5} h={3}><path d="M0 3 H5 L2.500 0Z" fill="#aaa" /></Svg></div>
                  <div className="flex h-[92px] w-[13px] shrink-0 flex-col items-center justify-center gap-[3px] rounded-[6px] border border-[#a5a29e] bg-[#f4f3f2]">
                    <i className="h-px w-1 bg-[#999]" /><i className="h-px w-1 bg-[#999]" /><i className="h-px w-1 bg-[#999]" />
                  </div>
                  <div className="mt-auto flex h-[14px] w-[11px] shrink-0 items-center justify-center rounded-b-[6px] bg-[#f6f5f4]"><Svg w={6} h={4}><path d="M0 0 H6 L3 4Z" fill="#666" /></Svg></div>
                </div>
              </div>
              <div className="ml-[17px] mt-px flex h-[13px] w-[413px] items-center rounded-[6px] border border-[#bcb9b5] bg-[#dcdad8]">
                <div className="flex h-[11px] w-3 items-center justify-center rounded-l-[6px] bg-[#f6f5f4]"><Svg w={3} h={5}><path d="M3 0 V5 L0 2.500Z" fill="#aaa" /></Svg></div>
                <div className="flex h-[13px] w-[198px] items-center justify-center gap-[3px] rounded-[6px] border border-[#a5a29e] bg-[#f6f5f4]">
                  <i className="h-1 w-px bg-[#999]" /><i className="h-1 w-px bg-[#999]" /><i className="h-1 w-px bg-[#999]" />
                </div>
                <div className="ml-auto flex h-[11px] w-[13px] items-center justify-center rounded-r-[6px] bg-[#f6f5f4]"><Svg w={4} h={6}><path d="M0 0 V6 L4 3Z" fill="#666" /></Svg></div>
              </div>
            </div>

            {/* chromatogram */}
            <div className="flex w-[2617px] shrink-0 flex-col">
              <div className="flex h-16 shrink-0 items-center pl-[8px]">
                <ZoomIcon />
                <span className="ml-[12px]"><StarIcon /></span>
                <span className="ml-[13px]"><TxtIcon /></span>
                <Sep className="ml-[10px]" />
                <span className="ml-[11px]"><IntegralIcon /></span>
                <span className="ml-[12px]"><SumIcon /></span>
                <ArrowL className="ml-[16px]" />
                <ArrowL flip className="ml-[20px]" />
                <Sep className="ml-[15px]" />
                <span className="ml-[10px]"><FolderArrow /></span>
                <Caret className="ml-px mt-[7px]" />
                <Sep className="ml-[9px]" />
                <span className="ml-[6px] flex h-[58px] w-[58px] items-center justify-center rounded-[6px] border border-[#a9a6a2] bg-linear-to-b from-[#f3f2f1] to-[#dedcda]"><EicIcon /></span>
                <span className="ml-[7px]">
                  <Svg w={48} h={48}><text x="0" y="38" fontFamily="Liberation Serif" fontWeight="700" fontSize="41" textLength="48" lengthAdjust="spacingAndGlyphs">TIC</text></Svg>
                </span>
                <Sep className="ml-[12px]" />
                <span className="ml-[5px] flex h-[58px] w-[58px] items-center justify-center rounded-[6px] border border-[#a9a6a2] bg-linear-to-b from-[#f3f2f1] to-[#dedcda]"><BarsIcon /></span>
                <span className="ml-[7px]"><StackIcon /></span>
                <span className="ml-[14px]"><BoxIcon /></span>
                <Sep className="ml-[13px]" />
              </div>
              <div className="ml-px h-[1036px] w-[2616px] overflow-hidden border border-[#bab5b0] bg-white"><Chart /></div>
            </div>
          </div>

          {/* bookmark bar */}
          <div className="flex h-16 shrink-0 items-center bg-[#d5d5d5] pl-3">
            <T w={283} className="text-[34px] font-bold leading-[64px] text-black">Bookmark Table</T>
            <span className="ml-[26px]"><MoveIcon /></span>
            <span className="ml-[12px]"><CheckIcon /></span>
            <span className="ml-[12px]"><CrossIcon /></span>
            <span className="ml-[25px]"><BulbIcon /></span>
            <span className="ml-[23px]"><MergeIcon /></span>
            <span className="ml-[11px]"><WindowsIcon /></span>
            <Caret className="mt-[7px]" />
            <Sep className="ml-[10px] !bg-[#e6e6e6]" />
            <span className="ml-[11px]"><ScatterIcon /></span>
            <span className="ml-[11px]"><CellsIcon /></span>
            <Sep className="ml-[12px] !bg-[#e6e6e6]" />
            <span className="ml-[10px]"><PdfIcon /></span>
            <span className="ml-[11px]"><CsvIcon /></span>
            <Caret className="mt-[7px]" />
            <span className="ml-[10px]"><JsonIcon /></span>
            <Sep className="ml-[12px] !bg-[#e6e6e6]" />
            <span className="ml-[11px]"><XmlIcon /></span>
            <span className="ml-auto mr-[29px] h-[2px] w-[7px] bg-black" />
          </div>

          {/* bookmark table */}
          <div className="flex h-[394px] shrink-0 flex-col border border-[#bcb8b4] bg-white">
            <div className="flex h-[48px] shrink-0 items-center border-b border-[#b0aca7] bg-linear-to-b from-white to-[#f1f0ee]">
              {columns.map(([t, w, tw], i) => (
                <div key={t} className={`flex h-full shrink-0 items-center pl-[8px] ${w ? 'border-r border-[#d5d3d0]' : ''}`} style={{ width: w || undefined }}>
                  <T w={tw}>{t}</T>
                  {i === 0 && <TriUp className="mb-[12px] ml-[61px]" />}
                </div>
              ))}
            </div>
            <div className="flex h-[34px] shrink-0 items-center leading-[34px] text-[#3c3c3c]">
              {columns.map(([t, w, , v, px, vw], i) => (
                <div key={t} className={`shrink-0 ${i === 0 ? 'pl-[43px]' : 'pl-[4px]'}`} style={{ width: w || undefined }}>
                  {i === 0 ? v : <T w={vw}>{v}</T>}
                </div>
              ))}
            </div>
          </div>
        </div>

        {/* right dock */}
        <div className="flex w-[62px] shrink-0 flex-col items-center pl-[2px]">
          <div className="flex h-[62px] items-center pt-[4px]"><Folders /></div>
          <div className="mt-px flex h-[58px] w-[58px] shrink-0 items-center justify-center rounded-[6px] border border-[#a9a6a2] bg-linear-to-b from-[#f3f2f1] to-[#dedcda]"><Molecule /></div>
          <div className="mt-[7px] flex flex-col gap-3">
            <MzBars /><Sliders /><Curve /><Waves /><C13 /><MolSearch /><PeakSearch /><Bubble /><QIcon /><GridIcon />
          </div>
          <span className="mt-[11px] h-px w-12 shrink-0 bg-[#cfccc9]" />
          <div className="mt-[6px] flex h-[58px] w-[58px] shrink-0 items-center justify-center rounded-[6px] border border-[#a9a6a2] bg-linear-to-b from-[#f3f2f1] to-[#dedcda]"><BookmarkPeak /></div>
        </div>
      </div>

      {/* status bar */}
      <div className="flex h-[44px] shrink-0 items-end border-t border-[#d8d6d3]">
        <div className="flex h-[41px] w-[3172px] items-center border border-[#c6c3c0] pl-[2px]">
          <T w={624}>Group Validation Status: Good=0 Bad=0 Total=1</T>
        </div>
        <div className="ml-[3px] flex h-[34px] grow items-start">
          <div className="flex h-[25px] w-[24px] items-center justify-end border border-r-0 border-[#c6c3c0]">
            <div className="flex h-[21px] w-5 items-center justify-center rounded-[5px] border border-[#b0ada9] bg-[#f8f7f6]">
              <Svg w={13} h={13}><path d="M1 1.500 H8 V5 H1Z M5 8.500 H12 V12 H5Z M6 5 L9 8" fill="none" stroke="#888" strokeWidth="1.200" /><path d="M0 1 h2 v4 h-2z M10 8 h2 v4 h-2z" fill="#333" /></Svg>
            </div>
          </div>
        </div>
      </div>

      <Dialog />
    </div>
  );
}
